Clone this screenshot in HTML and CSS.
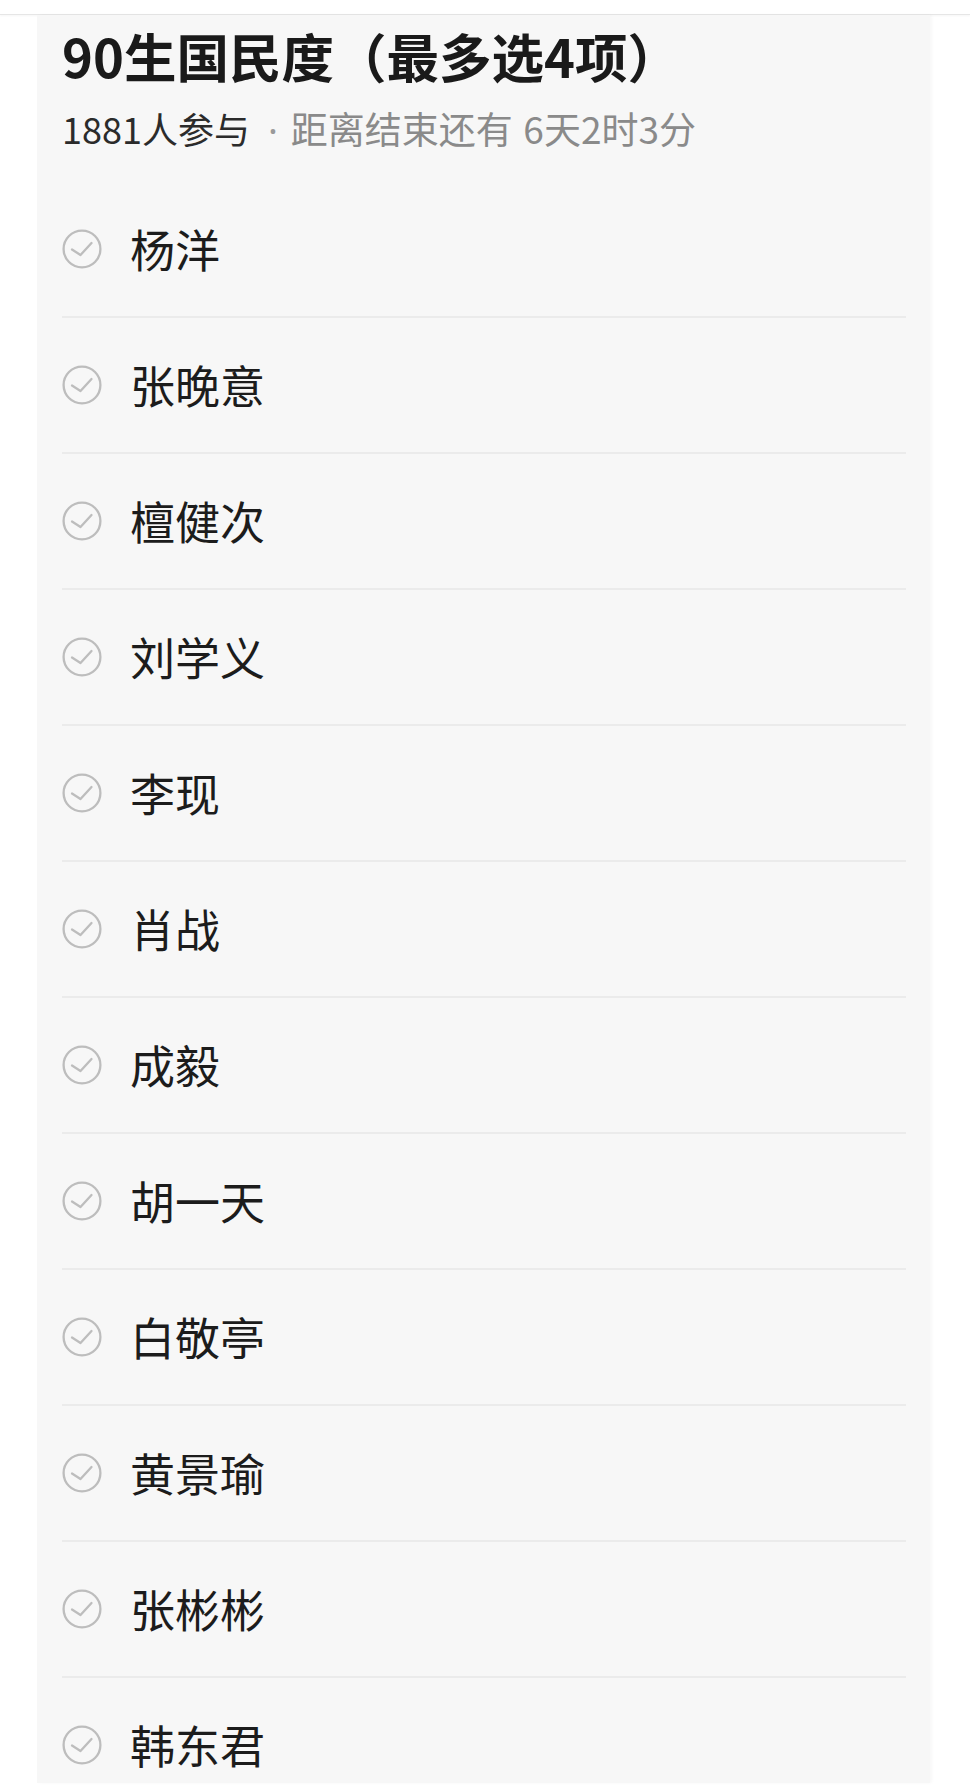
FILE: index.html
```html
<!DOCTYPE html>
<html lang="zh-CN">
<head>
<meta charset="utf-8">
<title>90生国民度</title>
<link rel="stylesheet" href="styles.css">
</head>
<body>
<div class="topbar"></div>
<div class="card">
  <h1 class="title">90生国民度（最多选4项）</h1>
  <p class="meta"><span class="count">1881人参与</span><span class="sep">·</span><span class="rest">距离结束还有<span class="gap"></span>6天2时3分</span></p>
  <ul class="options">
    <li class="option"><svg class="check" viewBox="0 0 40 40"><circle cx="20" cy="20" r="18.4"/><path d="M10 20.5 L18.5 26 L29.5 14"/></svg><span class="name">杨洋</span></li>
    <li class="option"><svg class="check" viewBox="0 0 40 40"><circle cx="20" cy="20" r="18.4"/><path d="M10 20.5 L18.5 26 L29.5 14"/></svg><span class="name">张晚意</span></li>
    <li class="option"><svg class="check" viewBox="0 0 40 40"><circle cx="20" cy="20" r="18.4"/><path d="M10 20.5 L18.5 26 L29.5 14"/></svg><span class="name">檀健次</span></li>
    <li class="option"><svg class="check" viewBox="0 0 40 40"><circle cx="20" cy="20" r="18.4"/><path d="M10 20.5 L18.5 26 L29.5 14"/></svg><span class="name">刘学义</span></li>
    <li class="option"><svg class="check" viewBox="0 0 40 40"><circle cx="20" cy="20" r="18.4"/><path d="M10 20.5 L18.5 26 L29.5 14"/></svg><span class="name">李现</span></li>
    <li class="option"><svg class="check" viewBox="0 0 40 40"><circle cx="20" cy="20" r="18.4"/><path d="M10 20.5 L18.5 26 L29.5 14"/></svg><span class="name">肖战</span></li>
    <li class="option"><svg class="check" viewBox="0 0 40 40"><circle cx="20" cy="20" r="18.4"/><path d="M10 20.5 L18.5 26 L29.5 14"/></svg><span class="name">成毅</span></li>
    <li class="option"><svg class="check" viewBox="0 0 40 40"><circle cx="20" cy="20" r="18.4"/><path d="M10 20.5 L18.5 26 L29.5 14"/></svg><span class="name">胡一天</span></li>
    <li class="option"><svg class="check" viewBox="0 0 40 40"><circle cx="20" cy="20" r="18.4"/><path d="M10 20.5 L18.5 26 L29.5 14"/></svg><span class="name">白敬亭</span></li>
    <li class="option"><svg class="check" viewBox="0 0 40 40"><circle cx="20" cy="20" r="18.4"/><path d="M10 20.5 L18.5 26 L29.5 14"/></svg><span class="name">黄景瑜</span></li>
    <li class="option"><svg class="check" viewBox="0 0 40 40"><circle cx="20" cy="20" r="18.4"/><path d="M10 20.5 L18.5 26 L29.5 14"/></svg><span class="name">张彬彬</span></li>
    <li class="option"><svg class="check" viewBox="0 0 40 40"><circle cx="20" cy="20" r="18.4"/><path d="M10 20.5 L18.5 26 L29.5 14"/></svg><span class="name">韩东君</span></li>
  </ul>
</div>
</body>
</html>
```
FILE: styles.css
```css
html, body {
  margin: 0;
  padding: 0;
  background: #ffffff;
}
body {
  width: 970px;
  height: 1786px;
  overflow: hidden;
  font-family: "Noto Sans CJK SC", "Noto Sans", sans-serif;
}
.topbar {
  height: 14px;
  border-bottom: 1px solid #e6e6e6;
  box-shadow: 0 1px 2px rgba(0, 0, 0, 0.04);
}
.card {
  margin-left: 37px;
  width: 893px;
  height: 1768px;
  box-sizing: border-box;
  padding: 7.5px 24px 0 25px;
  background: #f7f7f7;
  overflow: hidden;
  box-shadow: 2px 0 3px rgba(0, 0, 0, 0.03);
}
.title {
  margin: 0;
  font-size: 52.5px;
  line-height: 64px;
  font-weight: 700;
  color: #1a1a1a;
}
.meta {
  margin: 17.5px 0 0;
  font-size: 37px;
  line-height: 48px;
  color: #2b2b2b;
}
.count {
  font-size: 36px;
}
.sep {
  font-family: "Noto Sans", sans-serif;
  color: #9a9a9a;
  margin: 0 13px 0 18px;
}
.rest {
  color: #8a8a8a;
}
.gap {
  display: inline-block;
  width: 10.5px;
}
.options {
  list-style: none;
  margin: 27.5px 0 0;
  padding: 0;
}
.option {
  height: 134px;
  border-bottom: 2px solid #ebebeb;
  display: flex;
  align-items: center;
}
.check {
  width: 40px;
  height: 40px;
  flex: none;
  fill: none;
  stroke: #bdbdbd;
  stroke-width: 2.3;
  stroke-linecap: round;
  stroke-linejoin: round;
}
.name {
  margin-left: 28px;
  font-size: 45px;
  color: #1c1c1c;
}
```
